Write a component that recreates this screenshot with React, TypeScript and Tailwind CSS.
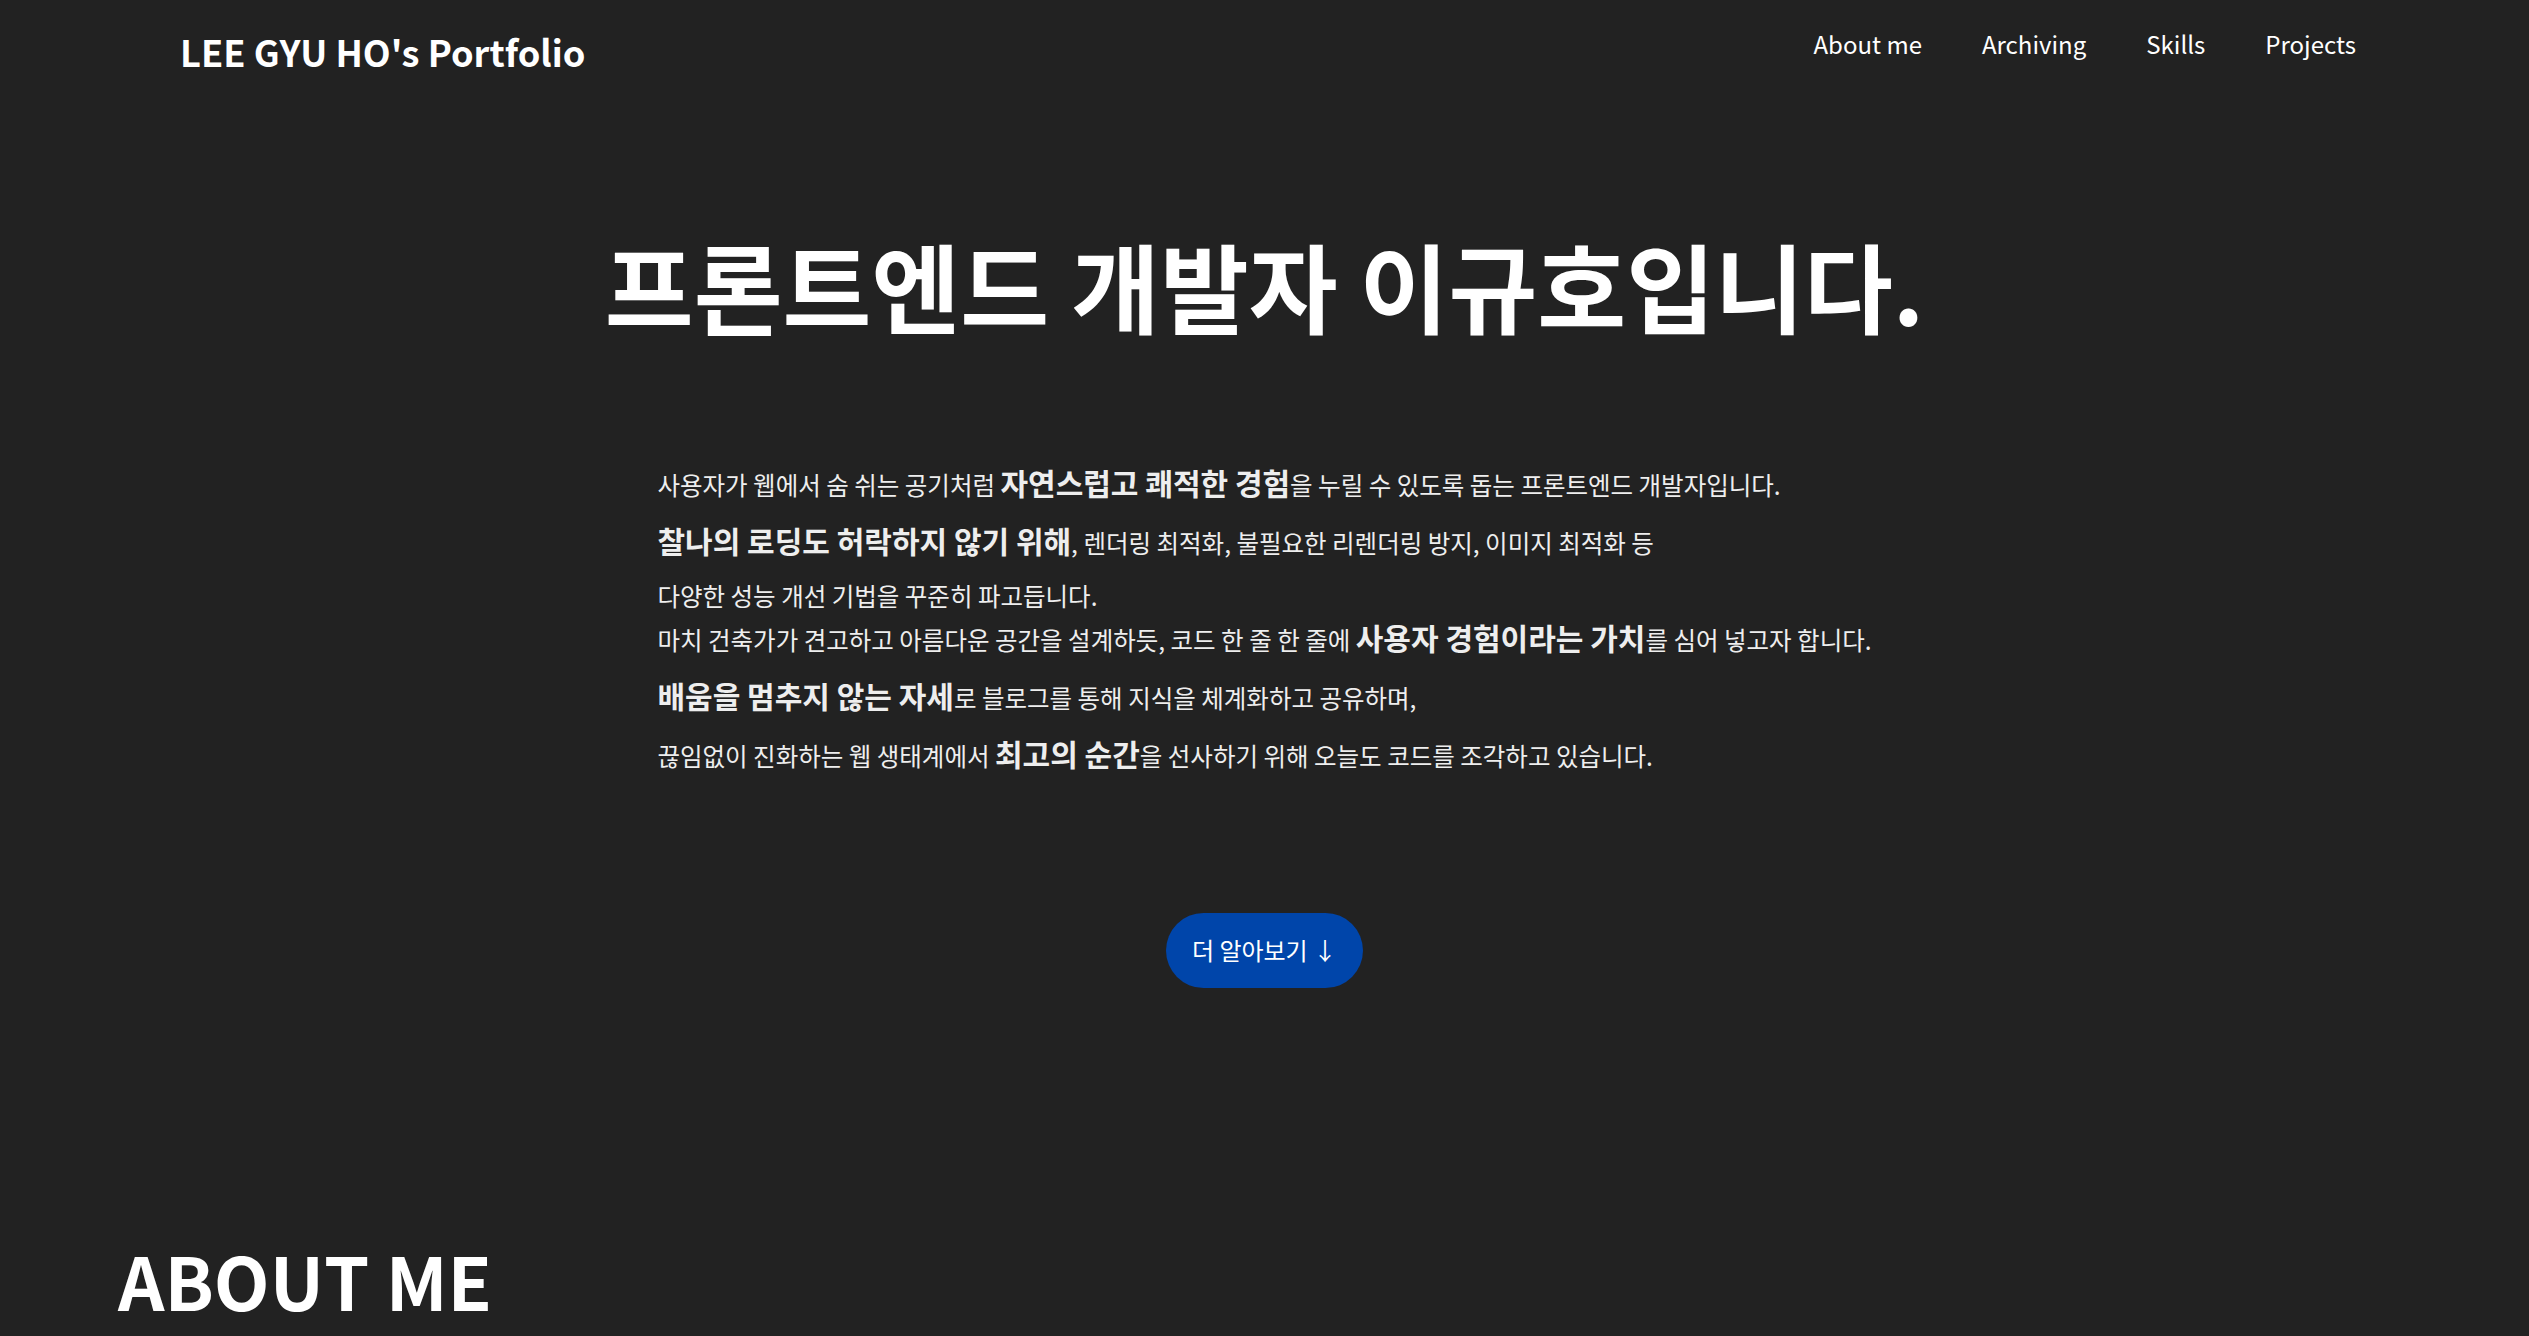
import React from "react";

const B = ({ children }: { children: React.ReactNode }) => (
  <strong className="text-[30px] font-bold">{children}</strong>
);

export default function App() {
  return (
    <div className="min-h-screen bg-[#222222] text-white font-['Noto_Sans_CJK_KR',sans-serif] overflow-hidden">
      <header className="flex justify-between items-start pt-6 pl-[180px] pr-[173px]">
        <h1 className="text-[36.2px] font-bold">LEE GYU HO's Portfolio</h1>
        <nav className="flex gap-[60px] text-[24px] pt-[2px]">
          <a>About me</a>
          <a>Archiving</a>
          <a>Skills</a>
          <a>Projects</a>
        </nav>
      </header>

      <section className="flex flex-col items-center">
        <h2 className="mt-[158px] text-[96.6px] font-bold leading-none">
          프론트엔드 개발자 이규호입니다.
        </h2>

        <div className="mt-[129px] flex flex-col text-[24.5px] text-[#eeeeee]">
          <p className="h-[40px] leading-[40px]">
            사용자가 웹에서 숨 쉬는 공기처럼 <B>자연스럽고 쾌적한 경험</B>을 누릴 수 있도록 돕는 프론트엔드 개발자입니다.
          </p>
          <p className="mt-[18px] h-[40px] leading-[40px]">
            <B>찰나의 로딩도 허락하지 않기 위해</B>, 렌더링 최적화, 불필요한 리렌더링 방지, 이미지 최적화 등
          </p>
          <p className="mt-[16px] h-[40px] leading-[40px]">다양한 성능 개선 기법을 꾸준히 파고듭니다.</p>
          <p className="mt-[1px] h-[40px] leading-[40px]">
            마치 건축가가 견고하고 아름다운 공간을 설계하듯, 코드 한 줄 한 줄에 <B>사용자 경험이라는 가치</B>를 심어 넣고자 합니다.
          </p>
          <p className="mt-[18px] h-[40px] leading-[40px]">
            <B>배움을 멈추지 않는 자세</B>로 블로그를 통해 지식을 체계화하고 공유하며,
          </p>
          <p className="mt-[18px] h-[40px] leading-[40px]">
            끊임없이 진화하는 웹 생태계에서 <B>최고의 순간</B>을 선사하기 위해 오늘도 코드를 조각하고 있습니다.
          </p>
        </div>

        <button className="mt-[140px] h-[75px] px-[26px] rounded-full bg-[#0045aa] text-[24px] text-white">
          더 알아보기 ↓
        </button>
      </section>

      <section className="pl-[118px] mt-[256px]">
        <h2 className="text-[72.5px] font-bold leading-none">ABOUT ME</h2>
      </section>
    </div>
  );
}
